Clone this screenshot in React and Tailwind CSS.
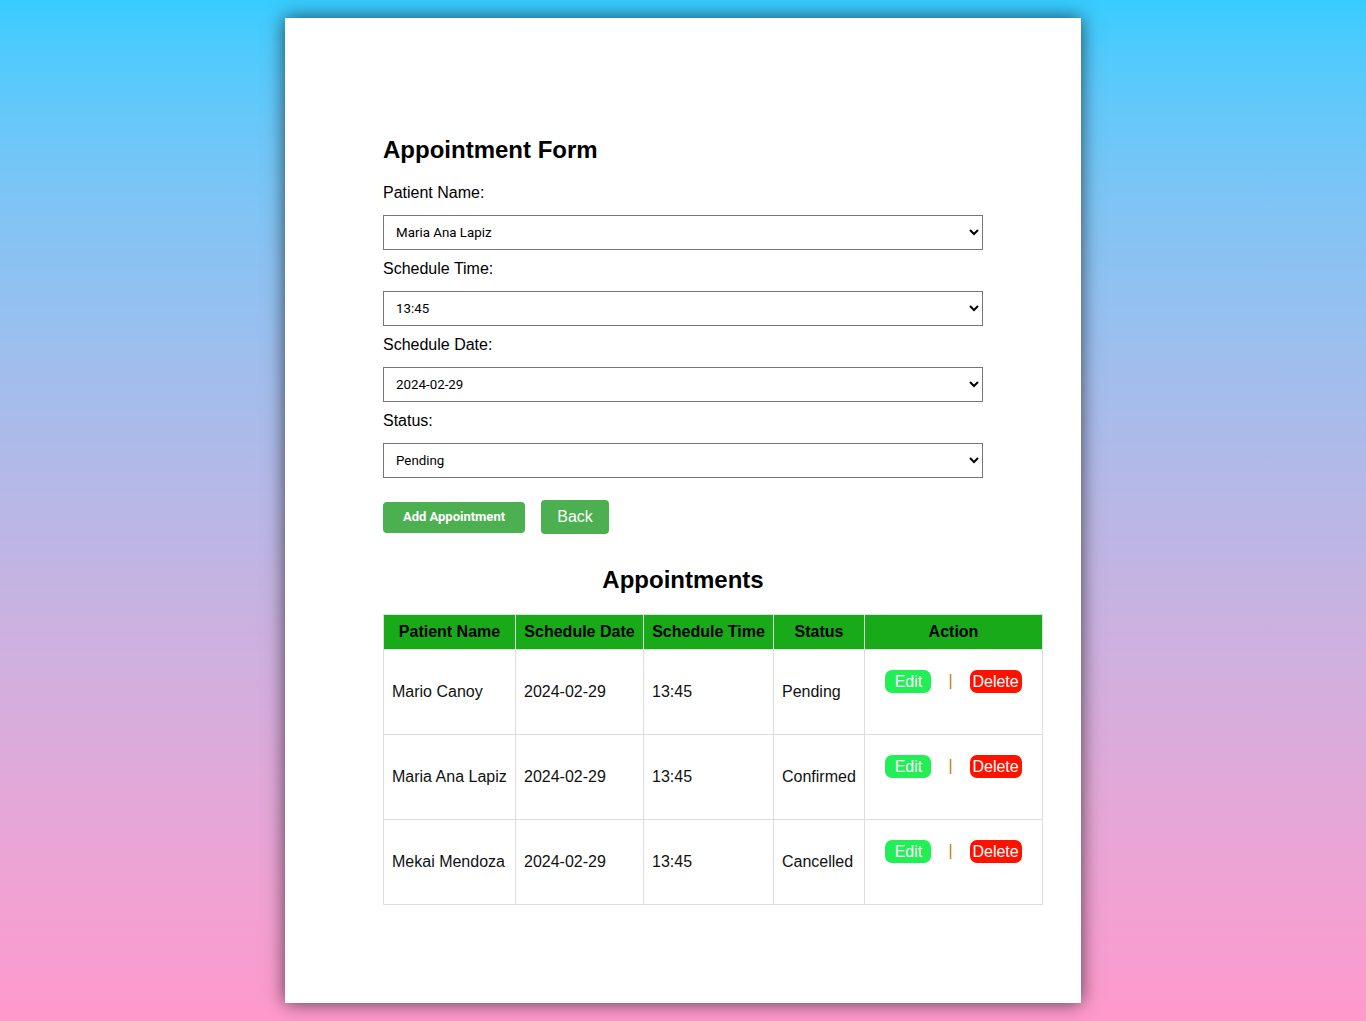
export default function App() {
  const rows = [
    { name: 'Mario Canoy', date: '2024-02-29', time: '13:45', status: 'Pending' },
    { name: 'Maria Ana Lapiz', date: '2024-02-29', time: '13:45', status: 'Confirmed' },
    { name: 'Mekai Mendoza', date: '2024-02-29', time: '13:45', status: 'Cancelled' },
  ];

  const fields = [
    { label: 'Patient Name:', value: 'Maria Ana Lapiz' },
    { label: 'Schedule Time:', value: '13:45' },
    { label: 'Schedule Date:', value: '2024-02-29' },
    { label: 'Status:', value: 'Pending' },
  ];

  return (
    <div className="min-h-[1021px] bg-gradient-to-b from-[#36ccff] to-[#ff99cc] py-[18px] font-['Liberation_Sans',Arial,sans-serif] text-black">
      <div className="mx-auto w-[796px] h-[985px] bg-white shadow-[0_0_18px_rgba(0,0,0,0.65)] px-[98px] pt-[117px]">
        <h2 className="text-[24px] font-bold leading-[30px] mb-[17px]">Appointment Form</h2>

        {fields.map((f) => (
          <div key={f.label}>
            <label className="block text-[16px] leading-[20px] pt-[1px] mb-[12px]">{f.label}</label>
            <select
              defaultValue={f.value}
              className="block w-[600px] h-[35px] border border-[#767676] px-[8px] text-[13.33px] font-['Roboto',sans-serif] mb-[8px] bg-white"
            >
              <option>{f.value}</option>
            </select>
          </div>
        ))}

        <div className="flex items-center gap-4 mt-[22px]">
          <button className="bg-[#4caf50] text-white text-[13px] font-bold font-['Roboto',sans-serif] h-[31px] w-[142px] rounded-[4px]">
            Add Appointment
          </button>
          <button className="bg-[#4caf50] text-white text-[16px] h-[34px] w-[68px] rounded-[4px]">
            Back
          </button>
        </div>

        <h2 className="text-center text-[24px] font-bold leading-[30px] mt-[31px] mb-[19px]">Appointments</h2>

        <table className="w-[660px] border-collapse text-[16px]">
          <thead>
            <tr className="bg-[#18aa18] h-[35px]">
              <th className="border border-[#ddd] w-[132px] font-bold">Patient Name</th>
              <th className="border border-[#ddd] w-[128px] font-bold">Schedule Date</th>
              <th className="border border-[#ddd] w-[130px] font-bold">Schedule Time</th>
              <th className="border border-[#ddd] w-[91px] font-bold">Status</th>
              <th className="border border-[#ddd] font-bold">Action</th>
            </tr>
          </thead>
          <tbody>
            {rows.map((r) => (
              <tr key={r.name} className="h-[85px]">
                <td className="border border-[#ddd] px-[8px] text-[#111]">{r.name}</td>
                <td className="border border-[#ddd] px-[8px] text-[#111]">{r.date}</td>
                <td className="border border-[#ddd] px-[8px] text-[#111]">{r.time}</td>
                <td className="border border-[#ddd] px-[8px] text-[#111]">{r.status}</td>
                <td className="border border-[#ddd] align-top pt-[19px]">
                  <div className="flex items-center justify-center gap-[17px]">
                    <button className="bg-[#22ee55] text-white text-[16px] h-[23px] w-[46px] rounded-[7px] leading-[23px]">Edit</button>
                    <span className="text-[#cc7a00] text-[16px]">|</span>
                    <button className="bg-[#ff1100] text-white text-[16px] h-[23px] w-[52px] rounded-[7px] leading-[23px]">Delete</button>
                  </div>
                </td>
              </tr>
            ))}
          </tbody>
        </table>
      </div>
    </div>
  );
}
